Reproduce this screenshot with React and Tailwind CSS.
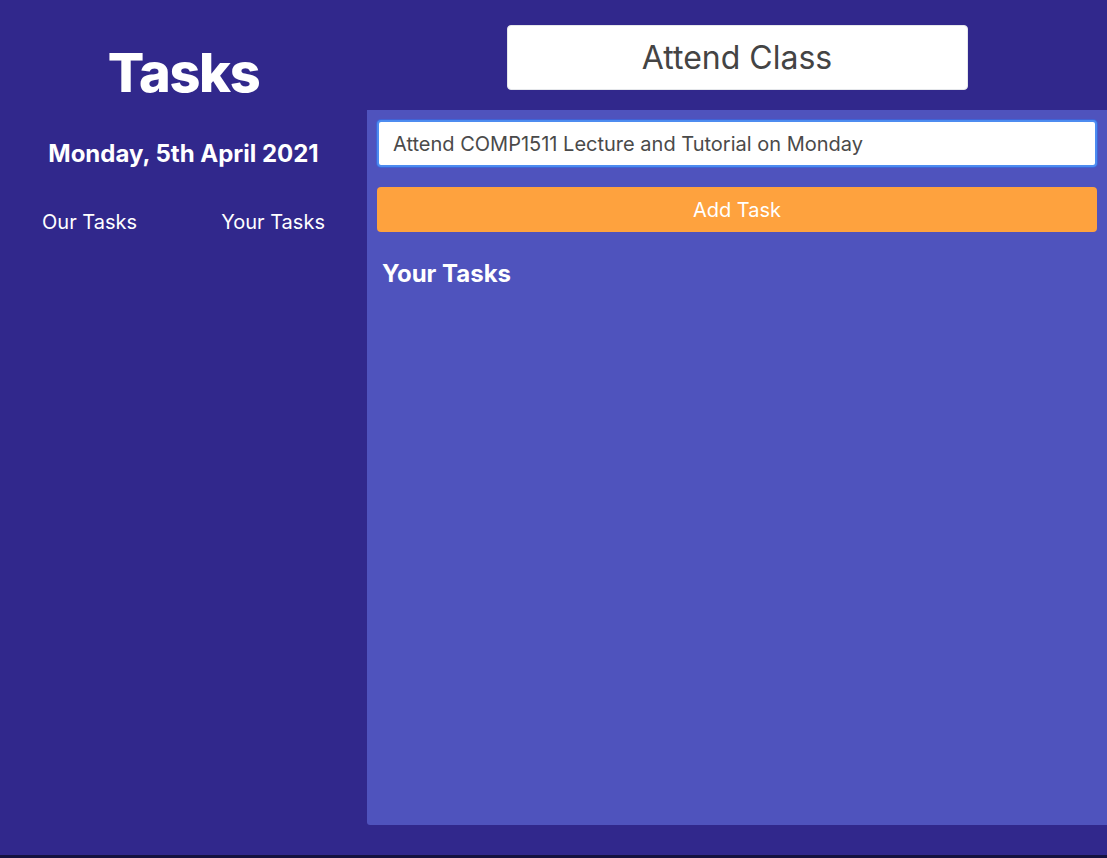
import { useState } from 'react'

export default function App() {
  const [text, setText] = useState('Attend COMP1511 Lecture and Tutorial on Monday')
  const [tab, setTab] = useState('yours')

  return (
    <div className="h-[858px] w-[1107px] bg-[#31288c] flex flex-col overflow-hidden" style={{ fontFamily: 'Inter, "Noto Sans", sans-serif' }}>
      <div className="flex flex-1">
        {/* sidebar */}
        <div className="w-[367px] shrink-0 flex flex-col items-center text-white">
          <h1 className="mt-[41px] text-[54px] leading-[64px] font-extrabold tracking-tight">Tasks</h1>
          <p className="mt-[34px] text-[24px] leading-[30px] font-bold">Monday, 5th April 2021</p>
          <div className="mt-[38px] w-full flex justify-around text-[20px]">
            <button onClick={() => setTab('ours')}>Our Tasks</button>
            <button onClick={() => setTab('yours')}>Your Tasks</button>
          </div>
        </div>

        {/* main */}
        <div className="flex-1 flex flex-col">
          <div className="h-[110px] flex items-start justify-center pt-[25px]">
            <div className="w-[461px] h-[65px] bg-white rounded-[4px] border border-gray-200 flex items-center justify-center text-[32px] text-[#444]">
              Attend Class
            </div>
          </div>
          <div className="mb-[30px] flex-1 bg-[#4f53bd] rounded-bl-[3px] px-[10px] pt-[10px]">
            <input
              value={text}
              onChange={e => setText(e.target.value)}
              className="w-full h-[47px] bg-white rounded-[4px] border-2 border-[#4d8cf0] shadow-[0_0_0_1px_#3f63d6] px-[14px] text-[20px] text-[#4a4a4a] outline-none"
            />
            <button className="mt-[20px] w-full h-[45px] bg-[#fea23e] rounded-[4px] text-white text-[20px]">Add Task</button>
            <h2 className="mt-[24px] ml-[5px] text-[24px] font-bold text-white">Your Tasks</h2>
          </div>
        </div>
      </div>
      <div className="h-[3px] bg-[#15123f]" />
    </div>
  )
}
